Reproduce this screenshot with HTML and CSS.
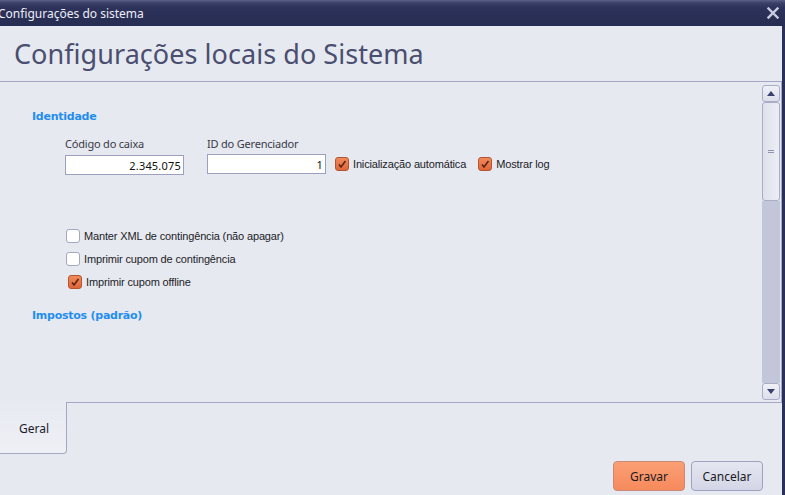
FILE: index.html
```html
<!DOCTYPE html>
<html lang="pt-BR">

<head>
    <meta charset="utf-8">
    <title>Configurações do sistema</title>
    <link rel="stylesheet" href="styles.css">
</head>

<body>
    <div class="window">
        <div class="titlebar">
            <span class="titlebar__text">Configurações do sistema</span>
            <svg class="titlebar__close" width="12" height="12" viewBox="0 0 12 12">
                <path d="M1.5 1.5 L10.5 10.5 M10.5 1.5 L1.5 10.5" stroke="#c9cce0" stroke-width="2.4" stroke-linecap="square" />
            </svg>
        </div>

        <div class="window-body">
            <div class="header">
                <h1>Configurações locais do Sistema</h1>
            </div>

            <div class="panel">
                <div class="panel__content">
                    <h2 class="group-title">Identidade</h2>
                    <div class="field-row">
                        <div class="field">
                            <label for="codigo-caixa">Código do caixa</label>
                            <input id="codigo-caixa" class="text-input text-input--caixa" value="2.345.075">
                        </div>
                        <div class="field">
                            <label for="id-gerenciador">ID do Gerenciador</label>
                            <div class="field__line">
                                <input id="id-gerenciador" class="text-input" value="1">
                                <span class="check check--checked"></span>
                                <span class="check-label">Inicialização automática</span>
                                <span class="check check--checked check--spaced"></span>
                                <span class="check-label">Mostrar log</span>
                            </div>
                        </div>
                    </div>

                    <div class="options">
                        <div class="option">
                            <span class="check"></span>
                            <span class="check-label">Manter XML de contingência (não apagar)</span>
                        </div>
                        <div class="option">
                            <span class="check"></span>
                            <span class="check-label">Imprimir cupom de contingência</span>
                        </div>
                        <div class="option option--shifted">
                            <span class="check check--checked"></span>
                            <span class="check-label">Imprimir cupom offline</span>
                        </div>
                    </div>

                    <h2 class="group-title group-title--taxes">Impostos (padrão)</h2>
                </div>

                <div class="scrollbar">
                    <div class="scrollbar__btn">
                        <svg width="8" height="5" viewBox="0 0 8 5"><path d="M0 5 L4 0 L8 5 Z" fill="#3a4070" /></svg>
                    </div>
                    <div class="scrollbar__thumb">
                        <span class="scrollbar__grip"></span>
                    </div>
                    <div class="scrollbar__track"></div>
                    <div class="scrollbar__btn">
                        <svg width="8" height="5" viewBox="0 0 8 5"><path d="M0 0 L8 0 L4 5 Z" fill="#3a4070" /></svg>
                    </div>
                </div>
            </div>

            <div class="tabs">
                <div class="tab">Geral</div>
                <div class="tabs__rest"></div>
            </div>

            <div class="footer">
                <button class="btn btn--primary">Gravar</button>
                <button class="btn btn--secondary">Cancelar</button>
            </div>
        </div>
    </div>
</body>

</html>
```

FILE: styles.css
```css
:root {
    --navy: #2b3058;
    --bg: #e6e9ef;
    --line: #a4a8c6;
    --blue: #1f8ef0;
}

* {
    box-sizing: border-box;
}

html,
body {
    margin: 0;
    width: 785px;
    height: 495px;
    overflow: hidden;
    background: var(--bg);
}

.window {
    display: flex;
    flex-direction: column;
    height: 495px;
}

.titlebar {
    height: 26px;
    display: flex;
    align-items: center;
    justify-content: space-between;
    padding: 0 6px 0 0;
    background: linear-gradient(#5a6088 0, #3a4068 3px, #2d325a 8px, #272c52 100%);
}

.titlebar__text {
    margin-left: -2px;
    color: #eceef6;
    font: 12px "Noto Sans", sans-serif;
}

.window-body {
    flex: 1;
    display: flex;
    flex-direction: column;
    border-right: 3px solid var(--navy);
}

.header {
    height: 55px;
    padding: 9px 0 0 14px;
}

.header h1 {
    margin: 0;
    font: 27px "Noto Sans", sans-serif;
    color: #4a4e70;
    letter-spacing: 0.05px;
}

.panel {
    height: 322px;
    display: flex;
    border-top: 1px solid var(--line);
    border-right: 1px solid var(--line);
    border-bottom: 1px solid var(--line);
}

.panel__content {
    flex: 1;
    padding: 28px 0 0 32px;
}

.group-title {
    margin: 0;
    font: bold 11px "DejaVu Sans", sans-serif;
    color: var(--blue);
    letter-spacing: -0.25px;
}

.group-title--taxes {
    margin-top: 20px;
}

.field-row {
    display: flex;
    gap: 23px;
    padding: 13px 0 0 33px;
}

.field {
    display: flex;
    flex-direction: column;
}

.field label {
    font: 11px "Noto Sans", sans-serif;
    letter-spacing: -0.2px;
    color: #3a3a48;
    margin-bottom: 2px;
    height: 16px;
}

.field__line {
    display: flex;
    align-items: center;
}

.text-input {
    width: 119px;
    height: 20px;
    padding: 0 2px;
    border: 1px solid #9ca0bc;
    background: #fff;
    text-align: right;
    font: 11px "Noto Sans", sans-serif;
    letter-spacing: 0.2px;
    color: #111;
}

.text-input--caixa {
    margin-top: 1px;
}

.check {
    flex: none;
    width: 14px;
    height: 14px;
    border: 1px solid #a3a7c2;
    border-radius: 3px;
    background: #fff;
    margin-right: 4px;
}

.check--checked {
    border-color: #b5532c;
    background:
        url("data:image/svg+xml,%3Csvg xmlns='http://www.w3.org/2000/svg' width='12' height='12'%3E%3Cpath d='M3 6.5 L5 9 L9.5 3' fill='none' stroke='%235a2410' stroke-width='1.6'/%3E%3C/svg%3E") center / 12px 12px no-repeat,
        linear-gradient(#f08a5c, #e0663a);
}

.field__line .check {
    margin-left: 9px;
}

.field__line .check--spaced {
    margin-left: 12px;
}

.check-label {
    font: 11px "Liberation Sans", sans-serif;
    letter-spacing: -0.15px;
    color: #1c1c28;
}

.options {
    display: flex;
    flex-direction: column;
    gap: 9px;
    padding: 54px 0 0 34px;
}

.option {
    display: flex;
    align-items: center;
}

.option--shifted {
    margin-left: 2px;
}

.scrollbar {
    width: 18px;
    margin: 3px 1px 2px 0;
    display: flex;
    flex-direction: column;
}

.scrollbar__btn {
    height: 17px;
    display: flex;
    align-items: center;
    justify-content: center;
    border: 1px solid #a9adc8;
    border-radius: 3px;
    background: linear-gradient(#f0f1f7, #dcdfeb);
}

.scrollbar__thumb {
    height: 99px;
    display: flex;
    align-items: center;
    justify-content: center;
    border: 1px solid #a9adc8;
    border-radius: 3px;
    background: linear-gradient(90deg, #dfe1ec, #eceef5);
}

.scrollbar__grip {
    width: 6px;
    height: 3px;
    border-top: 1px solid #8f93b2;
    border-bottom: 1px solid #8f93b2;
}

.scrollbar__track {
    flex: 1;
    background: #c3c6d9;
}

.tabs {
    display: flex;
    height: 52px;
    margin-top: -1px;
}

.tab {
    width: 67px;
    height: 52px;
    padding-top: 18px;
    padding-left: 19px;
    border-right: 1px solid var(--line);
    border-bottom: 1px solid var(--line);
    border-bottom-right-radius: 4px;
    background: linear-gradient(#e8eaf1, #eef0f6);
    font: 12px "Noto Sans", sans-serif;
    color: #1a1a2a;
}

.tabs__rest {
    flex: 1;
    border-top: 1px solid var(--line);
}

.footer {
    flex: 1;
    display: flex;
    justify-content: flex-end;
    align-items: flex-start;
    gap: 6px;
    padding: 7px 19px 0 0;
}

.btn {
    width: 72px;
    height: 30px;
    border-radius: 4px;
    font: 12px "Noto Sans", sans-serif;
    color: #1a1a24;
    padding: 0;
}

.btn--primary {
    border: 1px solid #c88a78;
    background: linear-gradient(#fb9f74, #f68a5c);
}

.btn--secondary {
    border: 1px solid #9ea2c0;
    background: linear-gradient(#e4e6f1, #d3d6e6);
}
```
